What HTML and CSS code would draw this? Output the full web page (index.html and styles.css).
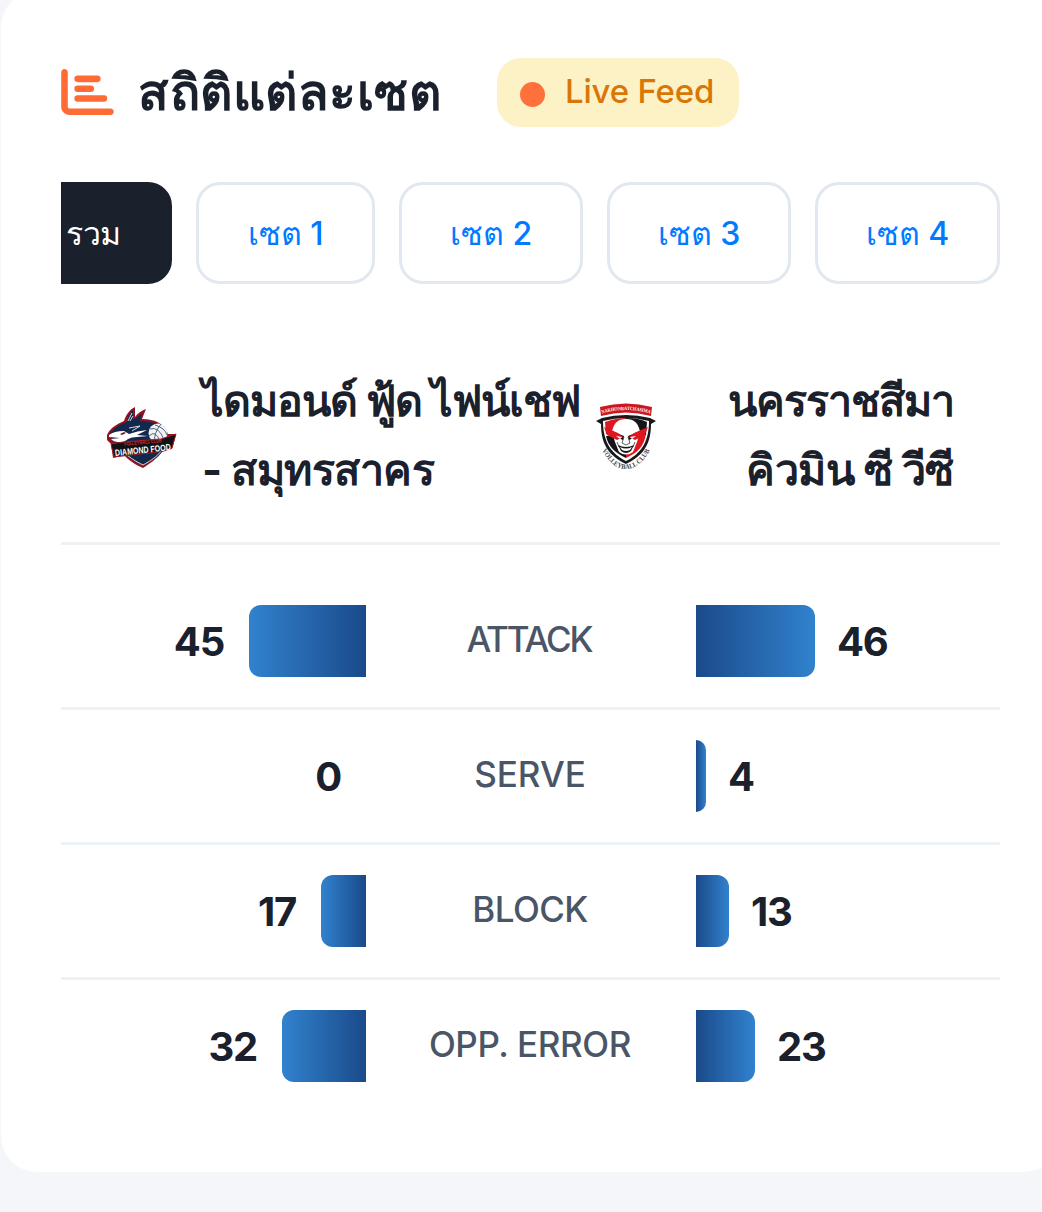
FILE: index.html
```html
<!DOCTYPE html>
<html lang="th">
<head>
    <meta charset="UTF-8">
    <meta name="viewport" content="width=device-width, initial-scale=1.0">
    <title>สถิติแต่ละเซต</title>
    <link rel="stylesheet" href="styles.css">
</head>
<body>
    <div class="card">
        <div class="card-header">
            <svg class="header-icon" viewBox="0 0 512 448">
                <path d="M32 0c17.700 0 32 14.300 32 32v336c0 8.800 7.200 16 16 16h400c17.700 0 32 14.300 32 32s-14.300 32-32 32H80c-44.200 0-80-35.800-80-80V32C0 14.300 14.300 0 32 0zM160 64h192a32 32 0 0 1 0 64H160a32 32 0 0 1 0-64zM160 160h128a32 32 0 0 1 0 64H160a32 32 0 0 1 0-64zM160 256h256a32 32 0 0 1 0 64H160a32 32 0 0 1 0-64z"/>
            </svg>
            <h2>สถิติแต่ละเซต</h2>
            <div class="live-badge"><span class="live-dot"></span><span class="live-text">Live Feed</span></div>
        </div>

        <div class="tabs">
            <button class="tab active">รวม</button>
            <button class="tab">เซต 1</button>
            <button class="tab">เซต 2</button>
            <button class="tab">เซต 3</button>
            <button class="tab">เซต 4</button>
        </div>

        <div class="teams">
            <svg class="logo-home" viewBox="0 0 70 62">
                <path fill="#8f1420" d="M0 29C3 22 10 18 17 15C19 9 22 4 28 1L28 11C31 7 34 5 39 3L35 13C48 13 58 18 61 28L69 28L65 43L55 46C50 53 42 58 36 62C29 59 21 54 17 49L6 52L4 38L0 34Z"/>
                <path fill="#13284d" d="M2 29C8 20 16 17 20 16C21 10 24 6 26 4L26 14C30 12 33 9 35 7L33 15C47 15 57 20 59 29L57 43C52 51 42 56 36 59C28 56 20 52 17 43L8 36Z"/>
                <path fill="#fff" d="M2 29Q7 25 17 25L22 28Q30 25 40 24L30 29L41 30L30 31C23 31 20 34 16 36Q8 37 4 33L13 32L2 31Z"/>
                <path fill="none" stroke="#d5dae4" stroke-width="1" d="M21 15L25 7M23 15L26 10M22 22L33 20M25 25L33 20M20 49C26 54 32 57 36 59C43 55 50 51 54 45"/>
                <path fill="#681d2c" d="M13 28l4-2 2 1-4 2z"/>
                <circle cx="51" cy="27" r="9.500" fill="#f1f3f5"/>
                <path fill="none" stroke="#52647d" stroke-width="1" d="M43 23Q52 20 57 34M48 19Q58 22 60 29M42 30Q49 23 53 36M48 36Q46 28 54 18"/>
                <path fill="#101216" stroke="#a41b25" stroke-width="1" d="M4 38L16 36L54 33L69 28L65 42L50 46L7 51Z"/>
                <text x="17" y="38" class="home-small" textLength="38" lengthAdjust="spacingAndGlyphs" transform="rotate(-5 36 38)">VOLLEYBALL CLUB</text>
                <text x="8" y="47" class="home-name" textLength="56" lengthAdjust="spacingAndGlyphs" transform="rotate(-6 36 45)">DIAMOND FOOD</text>
            </svg>
            <div class="team-name home"><span class="long-line">ไดมอนด์ ฟู้ด ไฟน์เชฟ</span><br>- สมุทรสาคร</div>
            <svg class="logo-away" viewBox="0 0 60 67">
                <defs>
                    <path id="name-curve" d="M5 11Q30 3 55 11"/>
                    <path id="club-curve" d="M6 47Q16 66 30 66Q44 66 54 47"/>
                </defs>
                <path fill="#cb1720" d="M4 4Q30-3 56 4L55 13Q30 6 5 13Z"/>
                <text class="away-name"><textPath href="#name-curve" startOffset="1" textLength="49" lengthAdjust="spacingAndGlyphs">NAKHONRATCHASIMA</textPath></text>
                <path fill="#19191b" d="M0 18L6 15Q30 9 54 15L60 18L55 21C55 43 46 53 30 61C14 53 5 43 5 21Z"/>
                <path fill="#fff" d="M7 18Q30 12 53 18C53 40 44 51 30 58C16 51 7 40 7 18Z"/>
                <path fill="#df1720" d="M9 19Q20 15 30 15V31H10ZM30 31H50C48 44 41 50 30 55Z"/>
                <path fill="#151517" d="M30 15Q43 15 51 19L50 32H30ZM10 33H30V55C19 50 12 43 10 33Z"/>
                <path fill="#fff" d="M16 29Q18 16 30 16Q42 16 44 29L41 39L37 49Q30 54 23 49L19 39Z"/>
                <path fill="#171719" d="M18 29L28 33L27 37L20 34ZM42 29L32 33L33 37L40 34ZM22 42Q30 46 38 42L35 48Q30 52 25 48Z"/>
                <path fill="#df1720" d="M8 24L22 30L27 34L21 37L11 32ZM52 24L38 30L33 34L39 37L49 32Z"/>
                <path fill="#fff" d="M20 33l6 1-2 2zM40 33l-6 1 2 2zM24 44Q30 47 36 44L34 47Q30 49 26 47Z"/>
                <path fill="none" stroke="#333" stroke-width=".8" d="M28 34l-2 6 4 2 4-2-2-6M21 39l2 5M39 39l-2 5"/>
                <text class="away-club"><textPath href="#club-curve" textLength="64" lengthAdjust="spacingAndGlyphs">VOLLEYBALL CLUB</textPath></text>
            </svg>
            <div class="team-name away"><span class="long-line">นครราชสีมา</span><br>คิวมิน ซี วีซี</div>
        </div>

        <div class="stat-row">
            <div class="side left"><span class="value">45</span><div class="bar" style="width: 117px"></div></div>
            <div class="label attack">ATTACK</div>
            <div class="side right"><div class="bar" style="width: 119px"></div><span class="value">46</span></div>
        </div>
        <div class="stat-row">
            <div class="side left"><span class="value">0</span><div class="bar" style="width: 0"></div></div>
            <div class="label serve">SERVE</div>
            <div class="side right"><div class="bar" style="width: 10px"></div><span class="value">4</span></div>
        </div>
        <div class="stat-row">
            <div class="side left"><span class="value">17</span><div class="bar" style="width: 45px"></div></div>
            <div class="label block">BLOCK</div>
            <div class="side right"><div class="bar" style="width: 33px"></div><span class="value">13</span></div>
        </div>
        <div class="stat-row">
            <div class="side left"><span class="value">32</span><div class="bar" style="width: 84px"></div></div>
            <div class="label error">OPP. ERROR</div>
            <div class="side right"><div class="bar" style="width: 59px"></div><span class="value">23</span></div>
        </div>
    </div>
</body>
</html>
```
FILE: styles.css
```css
* {
    box-sizing: border-box;
}
body {
    margin: 0;
    height: 1212px;
    overflow: hidden;
    background-color: #f4f6fa;
    color: #1a202c;
    font-family: Inter, "Noto Sans", sans-serif;
}
.card {
    width: 1059px;
    height: 1181px;
    margin: -9px 0 0 1px;
    padding: 67px 60px 0;
    background-color: white;
    border-radius: 36px;
}
.card-header {
    display: flex;
    align-items: center;
    height: 69px;
}
.header-icon {
    width: 53px;
    height: 46px;
    margin-bottom: 1px;
    fill: #ff6b35;
}
h2 {
    width: 303px;
    margin: 0 56px 1px 24px;
    font-size: 50px;
    line-height: 69px;
    font-weight: 700;
    letter-spacing: 0.5px;
    white-space: nowrap;
}
.live-badge {
    display: flex;
    align-items: center;
    width: 242px;
    height: 69px;
    padding-left: 23px;
    border-radius: 24px;
    background-color: #fdf1c6;
    color: #d97706;
    font-size: 33px;
    font-weight: 500;
}
.live-dot {
    width: 25px;
    height: 25px;
    margin: 3px 20px 0 0;
    border-radius: 50%;
    background-color: #ff703b;
}
.live-text {
    margin-bottom: 3px;
    letter-spacing: -0.2px;
    white-space: nowrap;
}
.tabs {
    display: flex;
    justify-content: flex-end;
    gap: 24px;
    width: 939px;
    height: 102px;
    margin-top: 55px;
    overflow: hidden;
}
.tab {
    flex: 0 0 184px;
    height: 102px;
    padding: 0;
    border: 3px solid #e2e8f0;
    border-radius: 24px;
    background-color: white;
    color: #007aff;
    font-family: inherit;
    font-size: 32px;
    font-weight: 450;
}
.tab.active {
    flex-basis: 157px;
    border-color: #1a202c;
    background-color: #1a202c;
    color: white;
    letter-spacing: -0.5px;
}
.tab:nth-child(2) {
    flex-basis: 179px;
}
.tab:last-child {
    flex-basis: 185px;
}
.teams {
    display: grid;
    grid-template-columns: 70px 420px 60px 1fr;
    align-items: center;
    height: 261px;
    padding: 0 45px 0 46px;
    border-bottom: 3px solid #edf2f7;
}
.logo-home {
    width: 70px;
    height: 62px;
    margin-top: 48px;
    overflow: visible;
}
.logo-away {
    width: 60px;
    height: 67px;
    margin-top: 46px;
    margin-left: -1px;
    overflow: visible;
}
.home-small {
    fill: #cb2b31;
    font: bold 5px "Liberation Sans", sans-serif;
}
.home-name {
    fill: #fff;
    font: bold 9px "Liberation Sans", sans-serif;
}
.away-name {
    fill: #fff;
    font: bold 5px "Liberation Serif", serif;
}
.away-club {
    fill: #444;
    font: bold 7px "Liberation Serif", serif;
}
.team-name {
    padding-top: 43px;
    font-size: 43px;
    line-height: 69px;
    font-weight: 700;
    letter-spacing: -0.5px;
    white-space: nowrap;
}
.long-line {
    letter-spacing: -1px;
}
.home {
    padding-left: 25px;
}
.away {
    padding-right: 1px;
    text-align: right;
}
.stat-row {
    display: grid;
    grid-template-columns: 305px 330px 304px;
    align-items: center;
    height: 135px;
    border-bottom: 3px solid #edf2f7;
}
.teams + .stat-row {
    height: 165px;
    padding-top: 30px;
}
.stat-row:last-child {
    border-bottom: 0;
    padding-bottom: 3px;
}
.side {
    display: flex;
    align-items: center;
    gap: 24px;
}
.right {
    gap: 22px;
}
.left {
    justify-content: flex-end;
}
.bar {
    height: 72px;
    border-radius: 12px 0 0 12px;
    background: linear-gradient(90deg, #3182ce, #1a4a8a);
}
.right .bar {
    border-radius: 0 12px 12px 0;
    background: linear-gradient(90deg, #1a4a8a, #3182ce);
}
.value {
    font-size: 40px;
    font-weight: 700;
    letter-spacing: -1.2px;
}
.left .value {
    margin-right: 1px;
}
.label {
    padding: 0 2px 4px 0;
    text-align: center;
    color: #4a5568;
    font-size: 35px;
    font-weight: 500;
    white-space: nowrap;
}
.attack {
    padding-right: 4px;
    letter-spacing: -2.1px;
}
.block {
    letter-spacing: -0.6px;
}
.error {
    letter-spacing: -0.4px;
}
```
